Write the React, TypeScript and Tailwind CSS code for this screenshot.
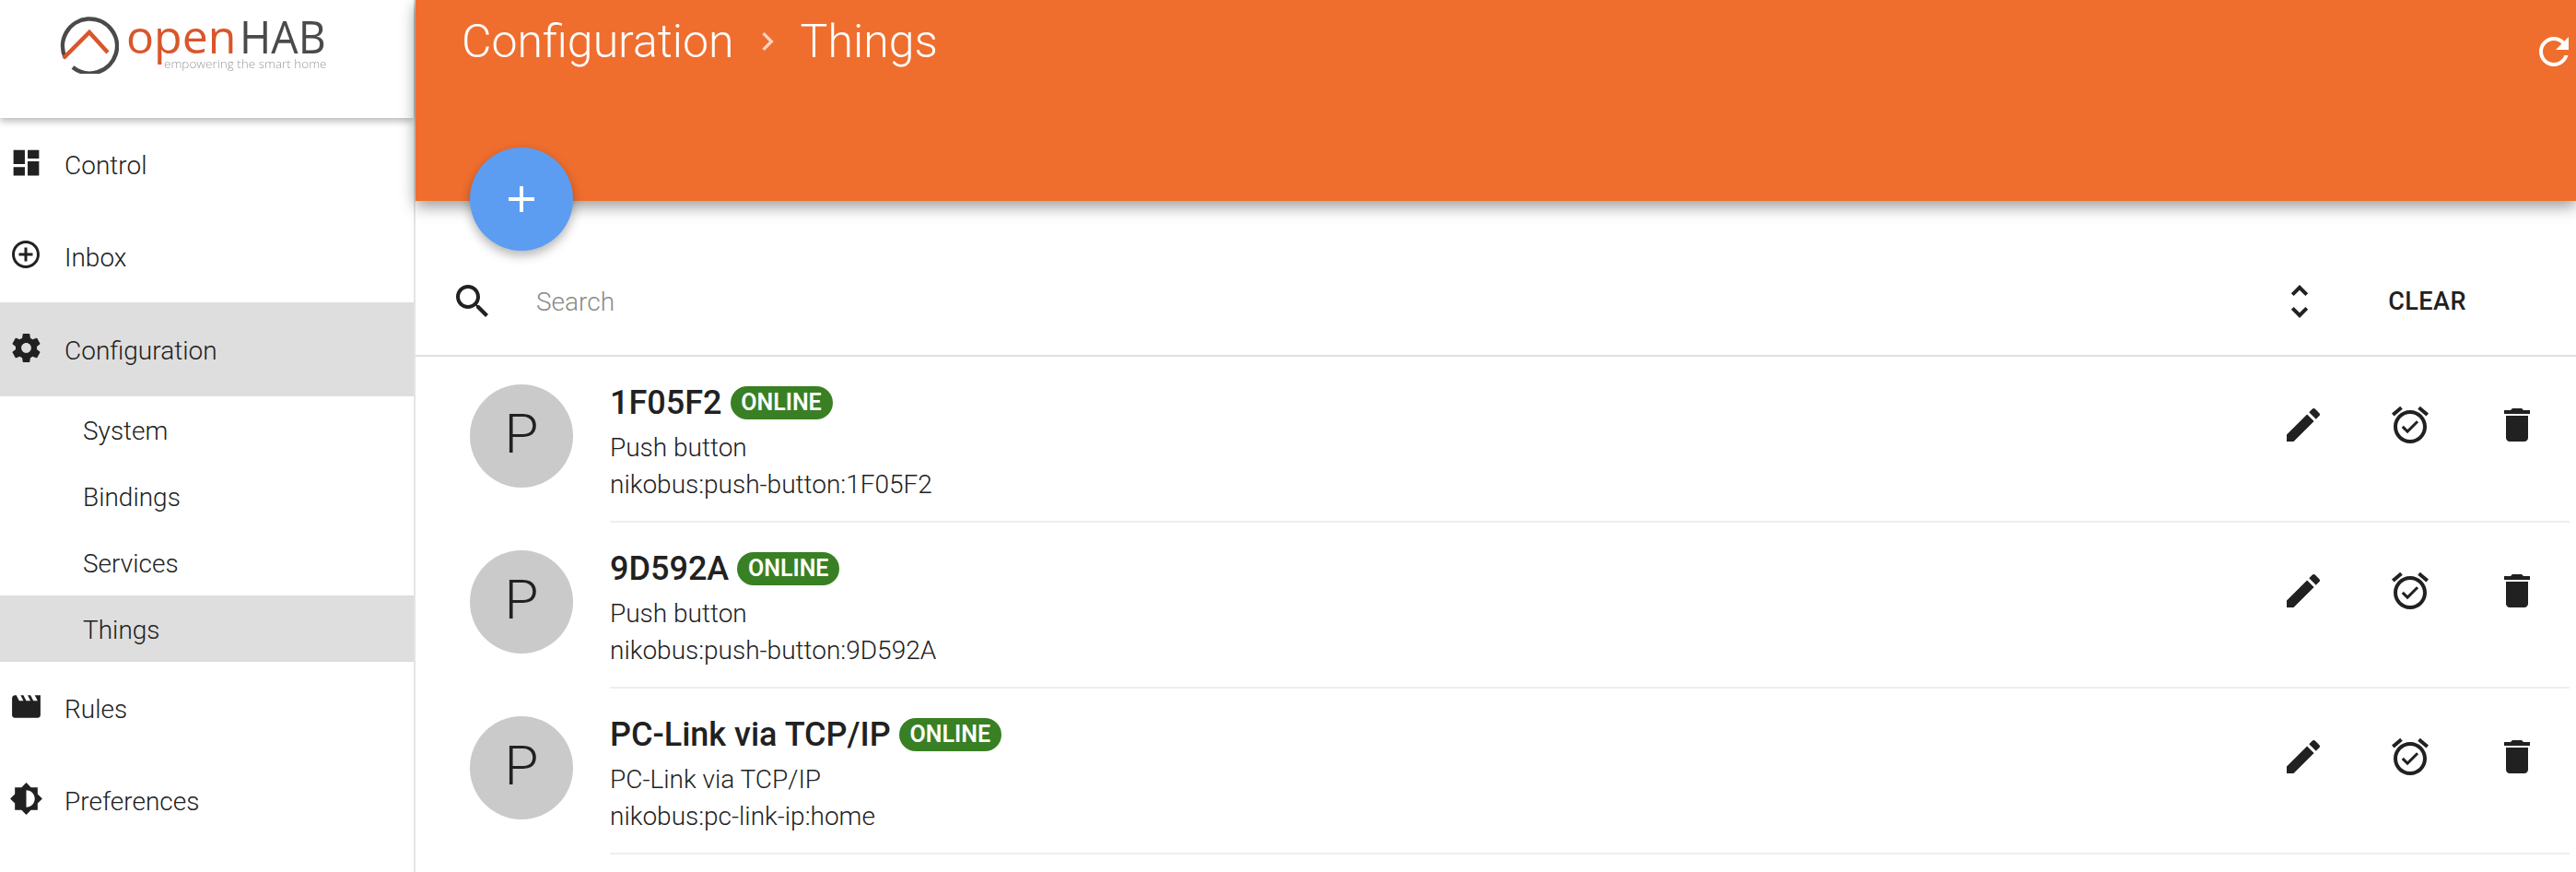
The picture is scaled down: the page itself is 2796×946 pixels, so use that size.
import React from "react";

type IconProps = { d: string; className: string };

function Icon({ d, className }: IconProps) {
  return (
    <svg viewBox="0 0 24 24" className={className} fill="currentColor" aria-hidden="true">
      <path d={d} />
    </svg>
  );
}

const P = {
  dashboard: "M3 13h8V3H3v10zm0 8h8v-6H3v6zm10 0h8V11h-8v10zm0-18v6h8V3h-8z",
  addCircle:
    "M13 7h-2v4H7v2h4v4h2v-4h4v-2h-4V7zm-1-5C6.48 2 2 6.48 2 12s4.48 10 10 10 10-4.48 10-10S17.52 2 12 2zm0 18c-4.41 0-8-3.59-8-8s3.59-8 8-8 8 3.59 8 8-3.59 8-8 8z",
  settings:
    "M19.43 12.98c.04-.32.07-.64.07-.98s-.03-.66-.07-.98l2.11-1.65c.19-.15.24-.42.12-.64l-2-3.46c-.12-.22-.39-.3-.61-.22l-2.49 1c-.52-.4-1.08-.73-1.69-.98l-.38-2.65C14.46 2.18 14.25 2 14 2h-4c-.25 0-.46.18-.49.42l-.38 2.65c-.61.25-1.17.59-1.69.98l-2.49-1c-.23-.09-.49 0-.61.22l-2 3.46c-.13.22-.07.49.12.64l2.11 1.65c-.04.32-.07.65-.07.98s.03.66.07.98l-2.11 1.65c-.19.15-.24.42-.12.64l2 3.46c.12.22.39.3.61.22l2.49-1c.52.4 1.08.73 1.69.98l.38 2.65c.03.24.24.42.49.42h4c.25 0 .46-.18.49-.42l.38-2.65c.61-.25 1.17-.59 1.69-.98l2.49 1c.23.09.49 0 .61-.22l2-3.46c.12-.22.07-.49-.12-.64l-2.11-1.65zM12 15.5c-1.93 0-3.5-1.57-3.5-3.5s1.57-3.5 3.5-3.5 3.5 1.57 3.5 3.5-1.57 3.5-3.5 3.5z",
  movie:
    "M18 4l2 4h-3l-2-4h-2l2 4h-3l-2-4H8l2 4H7L5 4H4c-1.1 0-1.99.9-1.99 2L2 18c0 1.1.9 2 2 2h16c1.1 0 2-.9 2-2V4h-4z",
  brightness:
    "M20 15.31L23.31 12 20 8.69V4h-4.69L12 .69 8.69 4H4v4.69L.69 12 4 15.31V20h4.69L12 23.31 15.31 20H20v-4.69zM12 18V6c3.31 0 6 2.69 6 6s-2.69 6-6 6z",
  add: "M19 13h-6v6h-2v-6H5v-2h6V5h2v6h6v2z",
  search:
    "M15.5 14h-.79l-.28-.27C15.41 12.59 16 11.11 16 9.5 16 5.91 13.09 3 9.5 3S3 5.91 3 9.5 5.91 16 9.5 16c1.61 0 3.09-.59 4.23-1.57l.27.28v.79l5 4.99L20.49 19l-4.99-5zm-6 0C7.01 14 5 11.99 5 9.5S7.01 5 9.5 5 14 7.01 14 9.5 11.99 14 9.5 14z",
  unfold:
    "M12 5.83L15.17 9l1.41-1.41L12 3 7.41 7.59 8.83 9 12 5.83zm0 12.34L8.83 15l-1.41 1.41L12 21l4.59-4.59L15.17 15 12 18.17z",
  refresh:
    "M17.65 6.35C16.2 4.9 14.21 4 12 4c-4.42 0-7.99 3.58-7.99 8s3.57 8 7.99 8c3.73 0 6.84-2.55 7.73-6h-2.08c-.82 2.33-3.04 4-5.65 4-3.31 0-6-2.69-6-6s2.69-6 6-6c1.66 0 3.14.69 4.22 1.78L13 11h7V4l-2.35 2.35z",
  chevron: "M10 6L8.59 7.41 13.17 12l-4.58 4.59L10 18l6-6z",
  edit:
    "M3 17.25V21h3.75L17.81 9.94l-3.75-3.75L3 17.25zM20.71 7.04c.39-.39.39-1.02 0-1.41l-2.34-2.34c-.39-.39-1.02-.39-1.41 0l-1.83 1.83 3.75 3.75 1.83-1.83z",
  alarm:
    "M22 5.72l-4.6-3.86-1.29 1.53 4.6 3.86L22 5.72zM7.88 3.39L6.6 1.86 2 5.71l1.29 1.53 4.59-3.85zM12 4c-4.97 0-9 4.03-9 9s4.02 9 9 9c4.97 0 9-4.03 9-9s-4.03-9-9-9zm0 16c-3.87 0-7-3.13-7-7s3.13-7 7-7 7 3.13 7 7-3.13 7-7 7zm-1.46-5.47L8.41 12.4l-1.06 1.06 3.18 3.18 6-6-1.06-1.06-4.93 4.95z",
  trash: "M6 19c0 1.1.9 2 2 2h8c1.1 0 2-.9 2-2V7H6v12zM19 4h-3.5l-1-1h-5l-1 1H5v2h14V4z",
};

function Logo() {
  return (
    <div className="relative h-[128px] shrink-0 bg-white shadow-[0_3px_8px_rgba(0,0,0,0.3)] z-10">
      <div className="flex items-start pl-[65px] pt-[16px] blur-[0.6px]">
        <svg viewBox="0 0 64 64" className="w-[64px] h-[64px] shrink-0" fill="none" aria-hidden="true">
          <path d="M6 47 A29.5 29.5 0 1 1 14 57" stroke="#4a4a4a" strokeWidth="4.5" />
          <path d="M4 47 L32 19 L52 41" stroke="#d9562b" strokeWidth="4.5" />
        </svg>
        <div className="ml-[8px] flex flex-col w-[216px]">
          <div className="flex items-baseline h-[46px] leading-[46px] font-['Open_Sans',sans-serif]">
            <span className="inline-block w-[123px] text-[50px] font-normal text-[#d9562b]">open</span>
            <span className="inline-block w-[93px] origin-left scale-x-[0.93] text-[50px] font-normal text-[#4a4a4a]">HAB</span>
          </div>
          <div className="ml-[41px] -mt-[1px] text-[13.5px] leading-[16px] whitespace-nowrap text-[#9a9a9a] font-['Open_Sans',sans-serif]">
            empowering the smart home
          </div>
        </div>
      </div>
    </div>
  );
}

function NavItem({ d, label, active, iconClass, height }: { d: string; label: string; active?: boolean; iconClass?: string; height?: string }) {
  return (
    <div className={`flex items-center ${height ?? "h-[100px]"} pl-[10px] pt-[4px] ${active ? "bg-[#dedede]" : ""}`}>
      <div className="w-[60px] shrink-0 flex justify-start -mt-[8px]">
        <Icon d={d} className={iconClass ?? "w-[37px] h-[37px]"} />
      </div>
      <span>{label}</span>
    </div>
  );
}

function SubItem({ label, active }: { label: string; active?: boolean }) {
  return (
    <div className={`flex items-center h-[72px] pl-[90px] pt-[4px] ${active ? "bg-[#dedede]" : ""}`}>{label}</div>
  );
}

function Sidebar() {
  return (
    <aside className="w-[451px] shrink-0 flex flex-col border-r-2 border-[#e4e4e4] bg-white text-[28px] font-light text-[#212121]">
      <Logo />
      <nav className="flex flex-col">
        <NavItem d={P.dashboard} label="Control" />
        <NavItem d={P.addCircle} label="Inbox" iconClass="w-[36px] h-[36px]" />
        <NavItem d={P.settings} label="Configuration" iconClass="w-[37px] h-[37px]" active height="h-[102px]" />
        <SubItem label="System" />
        <SubItem label="Bindings" />
        <SubItem label="Services" />
        <SubItem label="Things" active />
        <NavItem d={P.movie} label="Rules" />
        <NavItem d={P.brightness} label="Preferences" iconClass="w-[37px] h-[37px]" />
      </nav>
    </aside>
  );
}

function Row({ name, sub, id }: { name: string; sub: string; id: string }) {
  return (
    <div className="flex h-[180px] pl-[59px]">
      <div className="mt-[30px] w-[112px] h-[112px] shrink-0 rounded-full bg-[#cacaca] flex items-center justify-center text-[60px] leading-none font-light text-[#212121] pb-[4px]">
        P
      </div>
      <div className="ml-[40px] flex-1 flex mr-[7px] border-b-2 border-[#eeeeee] h-[180px]">
        <div className="flex-1 pt-[32px]">
          <div className="flex items-center h-[36px]">
            <span className="text-[36px] font-medium text-[#212121]">{name}</span>
            <span className="ml-[9px] h-[36px] w-[111px] rounded-full bg-[#388023] flex items-center justify-center text-white text-[25px] font-semibold">
              ONLINE
            </span>
          </div>
          <div className="mt-[11px] text-[28px] leading-[40px] font-light text-[#212121]">{sub}</div>
          <div className="text-[28px] leading-[40px] font-light text-[#212121]">{id}</div>
        </div>
        <div className="flex pt-[50px] gap-[68px] pr-[33px] text-[#212121]">
          <Icon d={P.edit} className="w-[48px] h-[48px]" />
          <Icon d={P.alarm} className="w-[48px] h-[48px]" />
          <Icon d={P.trash} className="w-[48px] h-[48px]" />
        </div>
      </div>
    </div>
  );
}

export default function App() {
  return (
    <div className="flex w-[2796px] h-[946px] overflow-hidden bg-white font-['Roboto',sans-serif]">
      <Sidebar />
      <main className="flex-1 flex flex-col min-w-0">
        <header className="relative h-[218px] shrink-0 bg-[#ef6e2e] shadow-[0_6px_16px_rgba(0,0,0,0.4)] z-10 text-white flex items-start justify-between pl-[50px]">
          <div className="flex items-center h-[90px] text-[50px] font-light">
            <span>Configuration</span>
            <Icon d={P.chevron} className="w-[40px] h-[40px] mx-[16px] opacity-70" />
            <span>Things</span>
          </div>
          <Icon d={P.refresh} className="w-[48px] h-[48px] mt-[32px]" />
          <button className="absolute left-[59px] top-[160px] w-[112px] h-[112px] rounded-full bg-[#5c9df2] text-white flex items-center justify-center shadow-[0_5px_12px_rgba(0,0,0,0.3)]">
            <Icon d={P.add} className="w-[48px] h-[48px]" />
          </button>
        </header>
        <div className="flex items-center h-[169px] shrink-0 border-b-2 border-[#e0e0e0] text-[#212121] pt-[52px] pl-[38px]">
          <Icon d={P.search} className="w-[48px] h-[48px] shrink-0 -mt-[1px]" />
          <span className="ml-[45px] flex-1 text-[28px] font-light text-[#8a8a8a]">Search</span>
          <Icon d={P.unfold} className="w-[48px] h-[48px] shrink-0 -mt-[1px]" />
          <span className="ml-[72px] mr-[119px] text-[27px] font-medium tracking-[0.5px]">CLEAR</span>
        </div>
        <Row name="1F05F2" sub="Push button" id="nikobus:push-button:1F05F2" />
        <Row name="9D592A" sub="Push button" id="nikobus:push-button:9D592A" />
        <Row name="PC-Link via TCP/IP" sub="PC-Link via TCP/IP" id="nikobus:pc-link-ip:home" />
      </main>
    </div>
  );
}
